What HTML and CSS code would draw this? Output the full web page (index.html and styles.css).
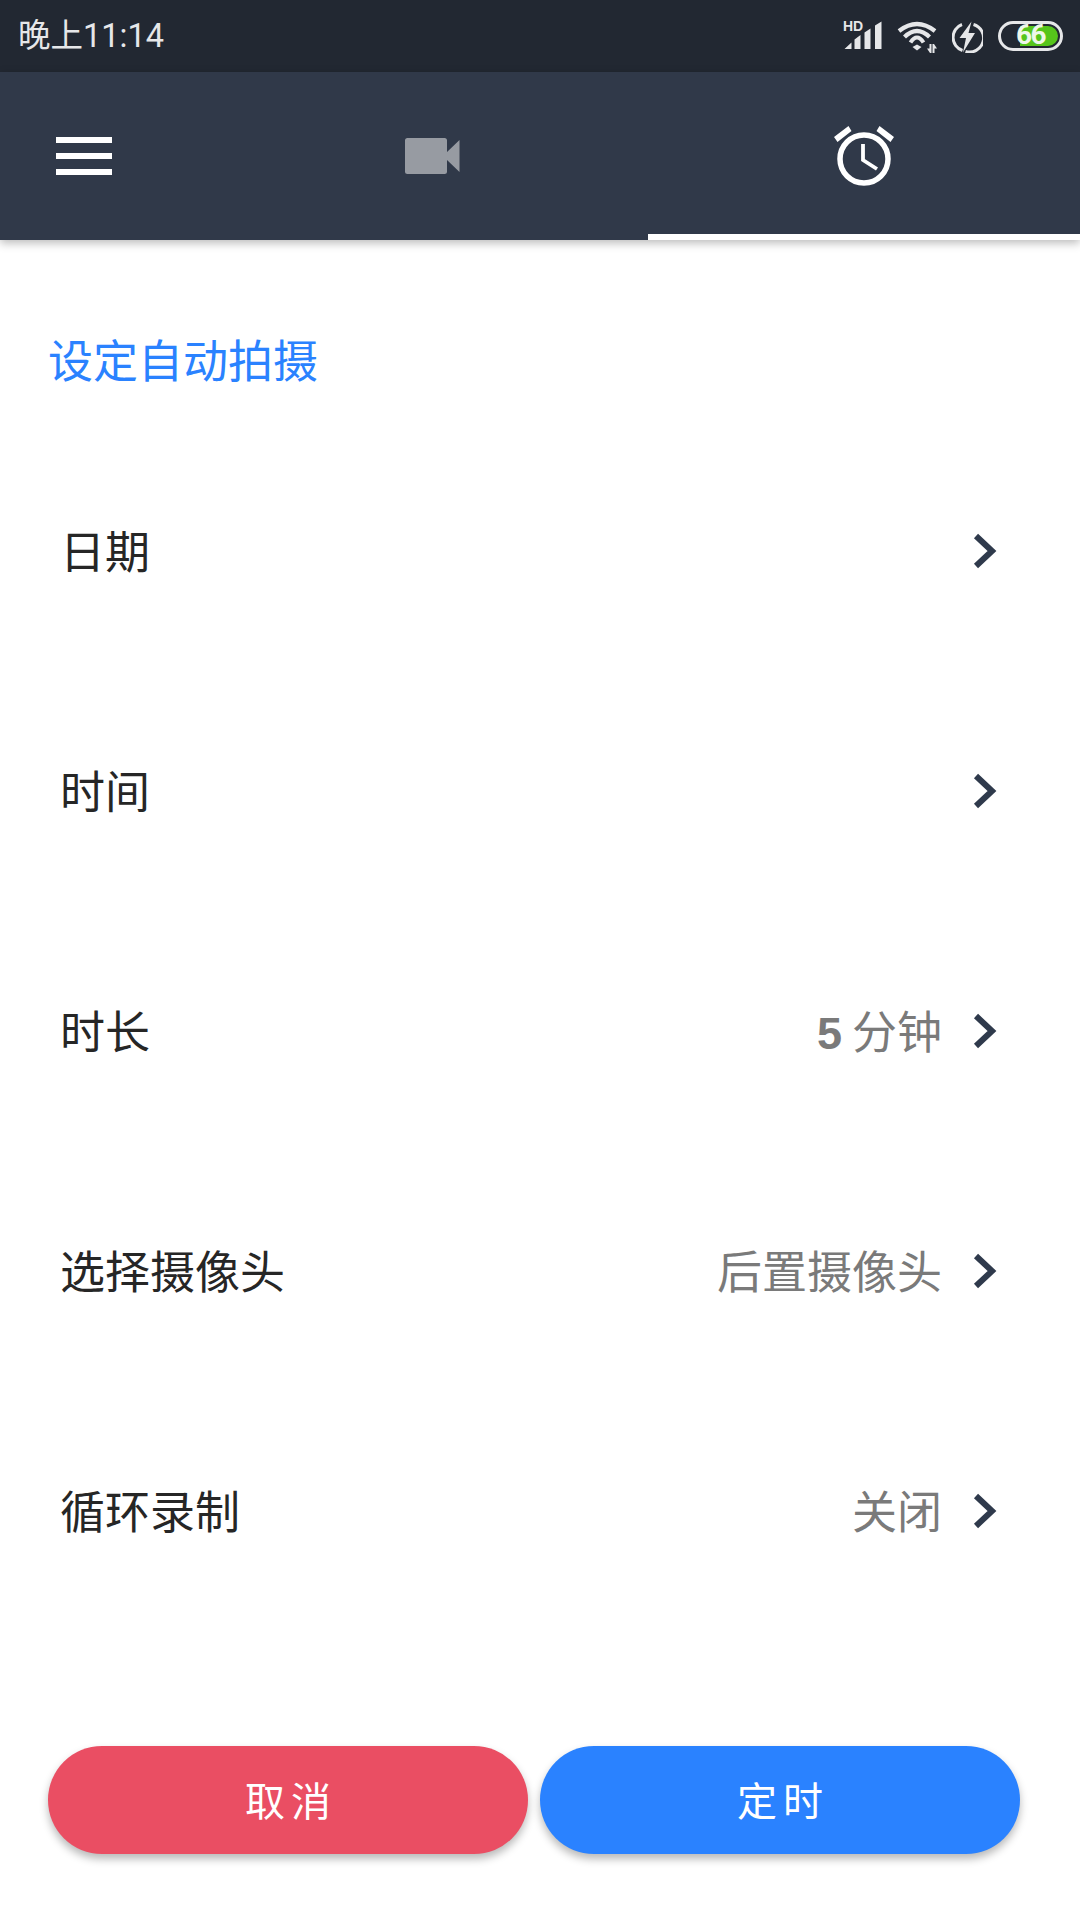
FILE: index.html
```html
<!DOCTYPE html>
<html lang="zh-CN">
<head>
<meta charset="utf-8">
<title>设定自动拍摄</title>
<link rel="stylesheet" href="styles.css">
</head>
<body>
<div class="screen">
  <header class="status">
    <span class="clock">晚上11:14</span>
    <div class="status-icons">
      <svg class="ic-signal" width="40" height="34" viewBox="0 -4 40 34"><text x="0" y="9.500" class="hd">HD</text><path d="M1.500 28 L8.500 21.500 V28Z M11.500 28 V18.500 L17.500 14 V28Z M21.500 28 V11.500 L27.500 7.500 V28Z M32 28 V4.500 L38.500 0.500 V28Z" fill="#e6e7e9"/></svg>
      <svg class="ic-wifi" width="40" height="33" viewBox="0 0 40 33"><path d="M2 10 Q20 -4 38 10" fill="none" stroke="#e6e7e9" stroke-width="4.300"/><path d="M7.500 16 Q20 4 32.500 16" fill="none" stroke="#e6e7e9" stroke-width="4.300"/><path d="M13.500 21.500 Q20 11.500 26.500 21.500" fill="none" stroke="#e6e7e9" stroke-width="4"/><path d="M15.500 26 L20 23.500 L24.500 26 L20 29.500Z" fill="#e6e7e9"/><path d="M32.500 23 H34.500 V32 H33 L30 27.500 H32.500Z M35.500 23 H37 L40 27.500 H37.500 V32 H35.500Z" fill="#e6e7e9"/></svg>
      <svg class="ic-bolt" width="31" height="32" viewBox="0 0 31 32"><path d="M10 3.500 A13.800 13.800 0 0 0 10.500 29.500 M21.500 3.500 A13.800 13.800 0 0 1 13.500 30.500" fill="none" stroke="#e6e7e9" stroke-width="3"/><path d="M19.500 0.500 L7.500 17 H14 L11 31.500 L23 12 H16.500Z" fill="#e6e7e9"/></svg>
      <div class="battery"><div class="level"></div><span class="pct">66</span></div>
    </div>
  </header>
  <nav class="tabs">
    <div class="tab tab-menu">
      <svg width="56" height="38" viewBox="0 0 56 38"><path d="M0 0H56V6H0Z M0 16H56V22H0Z M0 32H56V38H0Z" fill="#fff"/></svg>
    </div>
    <div class="tab tab-wide">
      <svg width="55" height="36" viewBox="0 0 55 36"><path d="M2.500 0 H39.500 Q42 0 42 2.500 V33.500 Q42 36 39.500 36 H2.500 Q0 36 0 33.500 V2.500 Q0 0 2.500 0Z M42 14 L54.500 2 V34 L42 22Z" fill="#979ba2"/></svg>
    </div>
    <div class="tab tab-wide tab-active">
      <svg width="60" height="60" viewBox="0 0 60 60"><circle cx="30" cy="33" r="24" fill="none" stroke="#fff" stroke-width="5.500"/><path d="M29 18 V34 L43 43" fill="none" stroke="#fff" stroke-width="3.800"/><path d="M0 11 L14.500 0 L17.500 5 L3.500 16Z M60 11 L45.500 0 L42.500 5 L56.500 16Z" fill="#fff"/></svg>
    </div>
  </nav>
  <main class="content">
    <h1 class="title">设定自动拍摄</h1>
    <ul class="rows">
      <li class="row"><span class="label">日期</span><span class="right"><svg class="chev" width="24" height="36" viewBox="0 0 24 36"><path d="M3 3 L19 18 L3 33" fill="none" stroke="#2f3a4c" stroke-width="6"/></svg></span></li>
      <li class="row"><span class="label">时间</span><span class="right"><svg class="chev" width="24" height="36" viewBox="0 0 24 36"><path d="M3 3 L19 18 L3 33" fill="none" stroke="#2f3a4c" stroke-width="6"/></svg></span></li>
      <li class="row"><span class="label">时长</span><span class="right"><span class="value"><b>5</b> 分钟</span><svg class="chev" width="24" height="36" viewBox="0 0 24 36"><path d="M3 3 L19 18 L3 33" fill="none" stroke="#2f3a4c" stroke-width="6"/></svg></span></li>
      <li class="row"><span class="label">选择摄像头</span><span class="right"><span class="value">后置摄像头</span><svg class="chev" width="24" height="36" viewBox="0 0 24 36"><path d="M3 3 L19 18 L3 33" fill="none" stroke="#2f3a4c" stroke-width="6"/></svg></span></li>
      <li class="row"><span class="label">循环录制</span><span class="right"><span class="value">关闭</span><svg class="chev" width="24" height="36" viewBox="0 0 24 36"><path d="M3 3 L19 18 L3 33" fill="none" stroke="#2f3a4c" stroke-width="6"/></svg></span></li>
    </ul>
  </main>
  <footer class="actions">
    <button class="btn btn-cancel">取消</button>
    <button class="btn btn-ok">定时</button>
  </footer>
</div>
</body>
</html>
```
FILE: styles.css
```css
* { box-sizing: border-box; }
html, body { margin: 0; padding: 0; background: #fff; }
body { font-family: Roboto, "Noto Sans CJK SC", sans-serif; }
.screen { width: 1080px; height: 1920px; display: flex; flex-direction: column; overflow: hidden; }

.status { height: 72px; background: #222832; display: flex; justify-content: space-between; padding: 0 17px 0 18px; }
.clock { color: #e6e7e9; font-size: 32.500px; line-height: 72px; font-family: Roboto, "Noto Sans CJK SC", sans-serif; }
.status-icons { display: flex; align-items: flex-start; gap: 15px; padding-top: 17px; height: 72px; }
.hd { font-family: "Liberation Sans", sans-serif; font-size: 14px; font-weight: 700; fill: #e6e7e9; }
.ic-signal { margin-right: -1px; }
.ic-wifi { margin-top: 4px; }
.ic-bolt { margin-top: 4px; }
.battery { position: relative; width: 65px; height: 30px; border: 3px solid #e6e7e9; border-radius: 15px; margin-top: 4px; }
.level { position: absolute; right: 2px; top: 2px; bottom: 2px; width: 38px; background: #56c51b; border-radius: 0 11px 11px 0; }
.pct { position: absolute; left: 15px; top: -4px; color: #eef7e9; font-size: 28px; line-height: 30px; font-weight: 700; font-family: Roboto, sans-serif; letter-spacing: -1.500px; }

.tabs { height: 168px; background: #303949; display: flex; box-shadow: 0 3px 9px rgba(0,0,0,.28); position: relative; }
.tab { display: flex; align-items: center; justify-content: center; }
.tab-menu { width: 216px; justify-content: flex-start; padding-left: 56px; }
.tab-wide { width: 432px; }
.tab-active { border-bottom: 6px solid #fff; }
.tab-active svg { margin-top: 6px; }

.content { flex: 1; display: flex; flex-direction: column; }
.title { margin: 0; padding: 92px 0 0 48px; height: 192px; font-size: 45px; line-height: 54px; font-weight: 400; color: #2a82ff; font-family: "Noto Sans CJK SC", sans-serif; }
.rows { list-style: none; margin: 0; padding: 0; }
.row { height: 240px; display: flex; align-items: center; justify-content: space-between; padding: 0 83px 0 60px; }
.label { font-size: 45px; color: #262626; font-family: "Noto Sans CJK SC", sans-serif; margin-bottom: 5px; }
.right { display: flex; align-items: center; gap: 31px; }
.value { font-size: 45px; color: #7a7a7a; font-family: "Noto Sans CJK SC", sans-serif; margin-bottom: 5px; }
.value b { font-family: "Liberation Sans", sans-serif; font-weight: 700; }
.chev { display: block; margin-bottom: 2px; }

.actions { display: flex; gap: 12px; padding: 0 60px 66px 48px; }
.btn { flex: 1; height: 108px; border: 0; border-radius: 54px; color: #fff; font-size: 40px; letter-spacing: 6px; padding: 0 0 2px 6px; font-family: "Noto Sans CJK SC", sans-serif; box-shadow: 0 5px 9px rgba(0,0,0,.28); }
.btn-cancel { background: #ea4e63; }
.btn-ok { background: #2a82ff; }
```
